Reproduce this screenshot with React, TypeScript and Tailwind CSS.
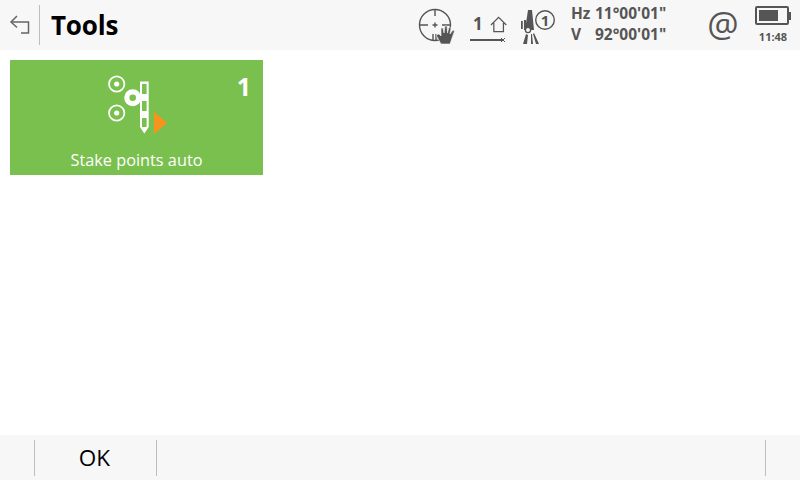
export default function App() {
  const font = { fontFamily: '"Open Sans", "Noto Sans", sans-serif' };
  return (
    <div className="w-[800px] h-[480px] flex flex-col bg-white overflow-hidden" style={font}>
      <header className="h-[50px] bg-[#f7f7f7] flex items-center shrink-0">
        <div className="w-[39px] flex justify-start pl-[9px]">
          <svg width="22" height="22" viewBox="0 0 22 22" fill="none" stroke="#666" strokeWidth="1.5">
            <path d="M2 8 H19.5 V19 H12" />
            <path d="M8 2 L2 8 L8 13.5" />
          </svg>
        </div>
        <div className="w-px h-[40px] bg-[#bdbdbd]" />
        <div className="ml-[11px] w-[367px] text-[26px] leading-none font-bold text-black tracking-[-0.2px]">Tools</div>
        <svg className="w-[38px] h-[40px]" viewBox="0 0 38 40" fill="none" stroke="#555" strokeWidth="1.4">
          <circle cx="17" cy="20" r="15.5" />
          <path d="M1 20 H10 M17 4 V11 M24 20 H33 M15 29 V36 M18 29 V36" />
          <path d="M14.5 20 H19.5 M17 17.5 V22.5" />
          <path d="M23 39 L18 30 L21 29 L23 31 L23 23 L25 23 L26 28 L27 21 L29 21 L29.5 28 L31 22 L33 23 L32 29 L35 25 L36.5 26 L34 33 L32 39 Z" fill="#555" stroke="#f7f7f7" strokeWidth="0.6" />
        </svg>
        <div className="ml-[13px] w-[38px] h-[40px] flex flex-col">
          <div className="h-[29px] flex items-end gap-[7px]">
            <span className="text-[17px] leading-[20px] font-bold text-[#555] ml-[4px]">1</span>
            <svg width="18" height="19" viewBox="0 0 18 19" fill="none" stroke="#555" strokeWidth="1.3">
              <path d="M1 10 L9 2 L17 10 M4 8 V17 H14 V8" />
            </svg>
          </div>
          <svg className="mt-[3px]" width="38" height="6" viewBox="0 0 38 6" fill="none" stroke="#555">
            <path d="M1 3 H34" strokeWidth="1.8" />
            <path d="M32 1 L36 5 M36 1 L32 5" strokeWidth="1" />
          </svg>
        </div>
        <svg className="ml-[11px] w-[38px] h-[40px]" viewBox="0 0 38 40" fill="none" stroke="#555">
          <path d="M10 5 H14 L16 25 H7 Z" fill="#555" stroke="none" />
          <rect x="3" y="16" width="1.8" height="8" fill="#555" stroke="none" />
          <rect x="6" y="15" width="2" height="10" fill="#555" stroke="none" />
          <circle cx="10" cy="25" r="2.6" fill="#f7f7f7" strokeWidth="1.3" />
          <path d="M8 29 L5 39 H9 L10 30 Z M13 29 L13 39 H15 L14 29 Z M15 29 L18 39 H21 L16 28 Z" fill="#555" stroke="none" />
          <circle cx="27" cy="15" r="9.3" fill="#f7f7f7" strokeWidth="1.4" />
          <text x="27" y="20.5" textAnchor="middle" fontSize="15" fontWeight="700" fill="#555" stroke="none" fontFamily="Open Sans">1</text>
        </svg>
        <div className="ml-[15px] w-[115px] text-[15.5px] leading-[21px] font-bold text-[#555] pb-[3px]">
          <div className="flex"><span className="w-[24px]">Hz</span><span>11°00'01"</span></div>
          <div className="flex"><span className="w-[24px]">V</span><span>92°00'01"</span></div>
        </div>
        <div className="ml-[23px] w-[28px] flex justify-center text-[35px] leading-none text-[#555] font-normal pb-[3px]">@</div>
        <div className="ml-[18px] w-[36px] flex flex-col items-center">
          <div className="flex items-center">
            <div className="w-[34px] h-[19px] border-[2px] border-[#555] rounded-[2px] p-[2px]">
              <div className="w-[19px] h-full bg-[#555]" />
            </div>
            <div className="w-[2px] h-[8px] bg-[#555]" />
          </div>
          <div className="text-[11px] leading-[14px] font-bold text-[#555] mt-[5px]">11:48</div>
        </div>
      </header>

      <main className="flex-1 p-[10px]">
        <div className="relative w-[253px] h-[115px] bg-[#7ac04e] flex flex-col items-center">
          <svg className="mt-[12px]" width="73" height="64" viewBox="0 0 73 64" fill="none">
            <circle cx="16.7" cy="12" r="7.7" stroke="#fff" strokeWidth="1.7" />
            <circle cx="16.7" cy="12" r="2.6" fill="#fff" />
            <circle cx="16.7" cy="41" r="7.7" stroke="#fff" strokeWidth="1.7" />
            <circle cx="16.7" cy="41" r="2.6" fill="#fff" />
            <circle cx="32.7" cy="25.7" r="8.5" fill="#fff" />
            <circle cx="32.7" cy="25.7" r="3.3" fill="#7ac04e" />
            <path d="M40 9.5 H48.7 V55 L44.3 61.5 L40 55 Z" fill="#fff" />
            <rect x="42" y="12" width="4.6" height="10" fill="#7ac04e" />
            <rect x="42" y="29" width="4.6" height="10" fill="#7ac04e" />
            <rect x="42" y="46" width="4.6" height="9" fill="#7ac04e" />
            <path d="M54 39.7 L67 51 L54 62 Z" fill="#f7931e" />
          </svg>
          <div className="absolute right-[12px] top-[9px] text-[25px] leading-[34px] font-bold text-white">1</div>
          <div className="absolute bottom-[5px] inset-x-0 text-center text-[16.3px] leading-[20px] text-white">Stake points auto</div>
        </div>
      </main>

      <footer className="h-[45px] bg-[#f7f7f7] shrink-0 flex items-start pt-[5px]">
        <div className="w-[34px]" />
        <div className="w-px h-[36px] bg-[#bdbdbd]" />
        <div className="w-[121px] h-[36px] flex items-center justify-center text-[22.5px] text-black pr-[2px]">OK</div>
        <div className="w-px h-[36px] bg-[#bdbdbd]" />
        <div className="w-[608px]" />
        <div className="w-px h-[36px] bg-[#bdbdbd]" />
      </footer>
    </div>
  );
}
